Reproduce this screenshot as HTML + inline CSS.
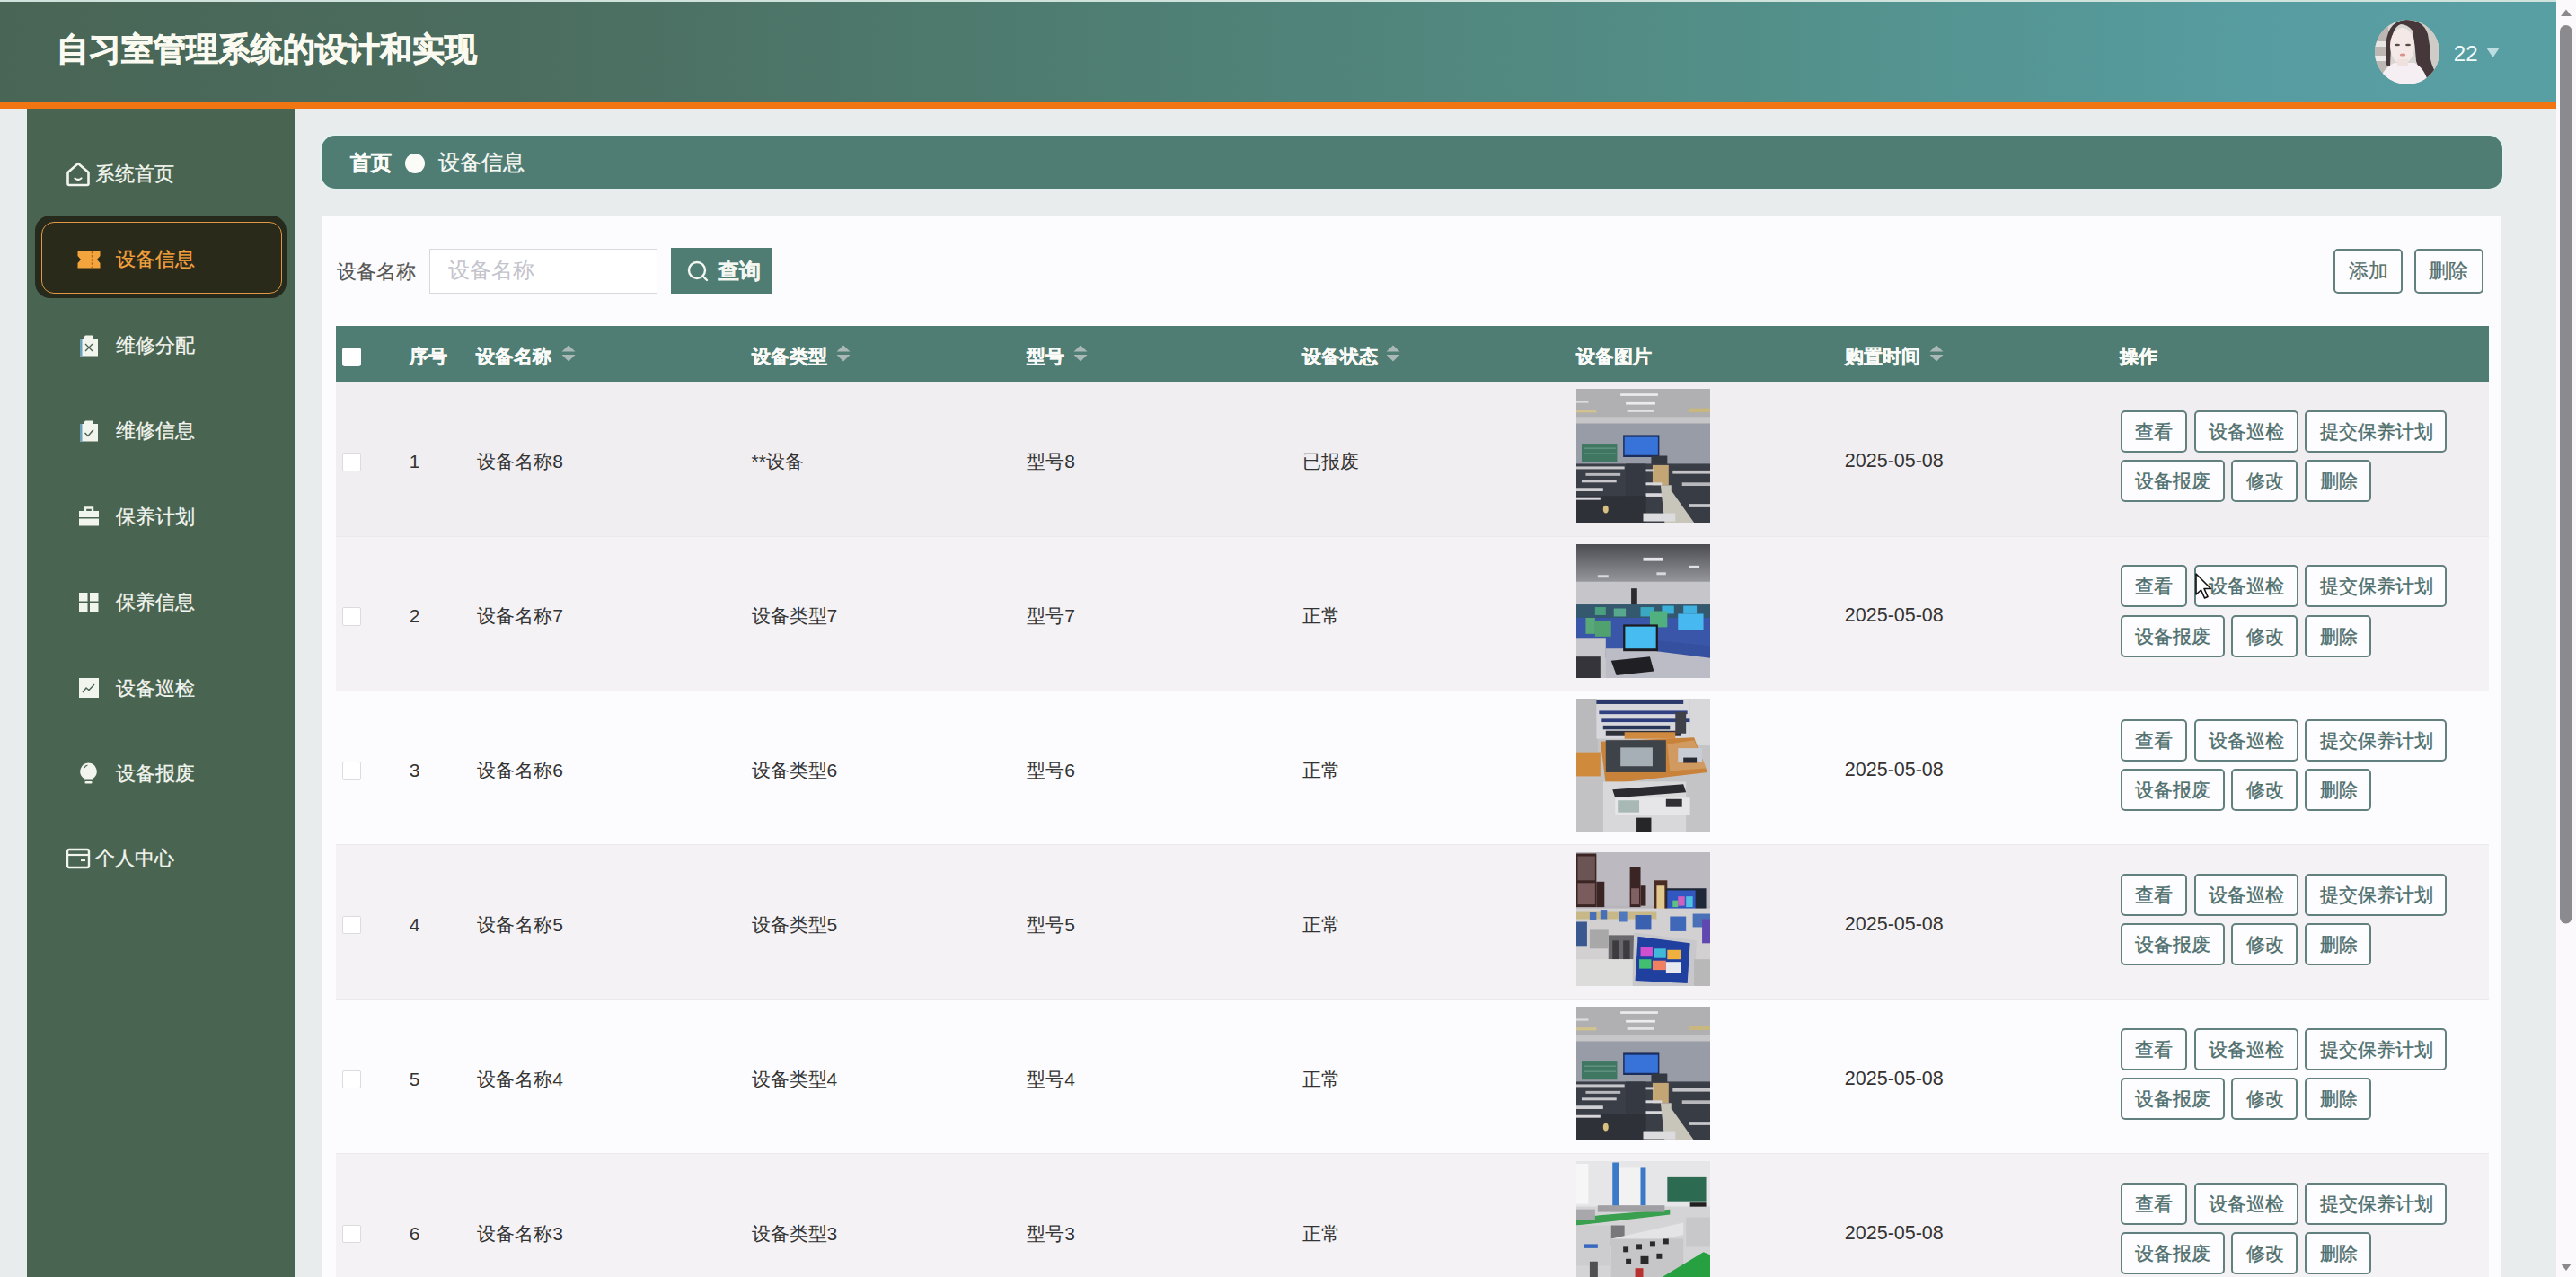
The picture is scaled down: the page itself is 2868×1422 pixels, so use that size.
<!DOCTYPE html>
<html><head><meta charset="utf-8">
<style>
*{box-sizing:border-box;margin:0;padding:0}
html,body{width:2868px;height:1422px;overflow:hidden}
body{position:relative;background:#e8ecec;font-family:"Liberation Sans",sans-serif;color:#333}
.a{position:absolute}
.t{position:absolute;white-space:nowrap}
svg{position:absolute;display:block}
.btn{position:absolute;border:2px solid #62807e;border-radius:5px;background:#fdfcfe}
</style></head><body>
<div class="a" style="left:0px;top:0px;width:2846.0px;height:114.0px;background:linear-gradient(90deg,#496555 0%,#4b6d5f 20%,#4f7f74 45%,#53908a 70%,#579ca0 88%,#589fa4 100%)"></div>
<div class="a" style="left:0px;top:0px;width:2846.0px;height:2.0px;background:#cfe2dc"></div>
<div class="t" style="left:62.6px;top:38.4px;font-size:35.5px;line-height:35.5px;color:#fbfaf0;font-weight:bold;-webkit-text-stroke:0.9px #fbfaf0;">自习室管理系统的设计和实现</div>
<div class="a" style="left:0px;top:114px;width:2846.0px;height:7.0px;background:#f27513"></div>
<svg style="left:2644px;top:22px" width="72" height="72" viewBox="0 0 72 72">
<defs><clipPath id="av"><circle cx="36" cy="36" r="36"/></clipPath></defs>
<g clip-path="url(#av)">
<rect width="72" height="72" fill="#d9d6d3"/>
<rect x="0" y="0" width="15" height="72" fill="#bcb7b2"/>
<rect x="0" y="24" width="14" height="6" fill="#e8e6e4"/>
<rect x="0" y="40" width="14" height="6" fill="#ecebea"/>
<rect x="50" y="0" width="22" height="72" fill="#cfcbc7"/>
<path d="M12 34 Q12 2 34 0 Q54 0 59 16 Q62 30 62 44 Q64 54 70 62 L58 72 Q50 58 46 46 Q45 28 42 12 Q36 5 29 5 Q19 8 18 30 L17 52 L12 50Z" fill="#46383a"/>
<ellipse cx="30.5" cy="29" rx="13.5" ry="20" fill="#f4e9e6"/>
<path d="M4 72 Q8 54 22 48 L44 48 Q56 54 60 72Z" fill="#f5eff3"/>
<rect x="25" y="44" width="12" height="7" fill="#efe1dd"/>
<ellipse cx="25" cy="28" rx="3" ry="1.3" fill="#5a4a44"/><ellipse cx="37" cy="28" rx="3" ry="1.3" fill="#5a4a44"/>
<ellipse cx="31" cy="39" rx="3.2" ry="1.5" fill="#d8948c"/>
</g></svg>
<div class="t" style="left:2731.8px;top:48.4px;font-size:24px;line-height:24px;color:#f4fbfb;">22</div>
<svg style="left:2767px;top:52px" width="17" height="13" viewBox="0 0 17 13"><path d="M1 1 L16 1 L8.5 12Z" fill="#bcdde2"/></svg>
<div class="a" style="left:30px;top:121px;width:298.0px;height:1301.0px;background:#4a6452"></div>
<div class="a" style="left:39px;top:240px;width:280.0px;height:92.0px;background:#252a1c;border-radius:17px"></div>
<div class="a" style="left:45.5px;top:246.5px;width:268.0px;height:80.0px;background:#2a2a1b;border:1.7px solid #e09845;border-radius:14px"></div>
<svg style="left:72.5px;top:179.5px" width="28" height="28" viewBox="0 0 28 28"><path d="M2.5 12 L14 2 L25.5 12 V24.5 Q25.5 26 24 26 H4 Q2.5 26 2.5 24.5Z" fill="none" stroke="#f2f5ee" stroke-width="2.6" stroke-linejoin="round"/><path d="M10.5 18.5 Q14 21.5 17.5 18.5" fill="none" stroke="#f2f5ee" stroke-width="2.2" stroke-linecap="round"/></svg>
<div class="t" style="left:105.5px;top:182.5px;font-size:22px;line-height:22px;color:#f2f5ee;-webkit-text-stroke:0.3px #f2f5ee;">系统首页</div>
<svg style="left:86px;top:279px" width="26" height="20" viewBox="0 0 26 20"><path d="M0.5 0.5 H25.5 V6 L22 10 L25.5 14 V19.5 H0.5 V14 L4 10 L0.5 6Z" fill="#f3a43c"/><path d="M16.5 1 V19" stroke="#b06a20" stroke-width="1.6" stroke-dasharray="2.5 1.6"/></svg>
<div class="t" style="left:129.3px;top:277.7px;font-size:22px;line-height:22px;color:#f3a23e;-webkit-text-stroke:0.3px #f3a23e;">设备信息</div>
<svg style="left:88px;top:373px" width="22" height="24" viewBox="0 0 22 24"><path d="M1 4 H6 V2 Q6 0.5 7.5 0.5 H14.5 Q16 0.5 16 2 V4 H21 V23.5 H1Z" fill="#f2f5ee"/><rect x="1" y="4" width="2.5" height="19.5" fill="#6aa0b8"/><path d="M7 10 L15 18 M15 10 L7 18" stroke="#4a6452" stroke-width="1.4"/></svg>
<div class="t" style="left:129.3px;top:374.0px;font-size:22px;line-height:22px;color:#f2f5ee;-webkit-text-stroke:0.3px #f2f5ee;">维修分配</div>
<svg style="left:88px;top:468px" width="22" height="24" viewBox="0 0 22 24"><path d="M1 4 H6 V2 Q6 0.5 7.5 0.5 H14.5 Q16 0.5 16 2 V4 H21 V23.5 H1Z" fill="#f2f5ee"/><rect x="1" y="4" width="2.5" height="19.5" fill="#6aa0b8"/><path d="M6.5 14 L10 17.5 L16 10.5" fill="none" stroke="#4a6452" stroke-width="1.5"/></svg>
<div class="t" style="left:129.3px;top:468.5px;font-size:22px;line-height:22px;color:#f2f5ee;-webkit-text-stroke:0.3px #f2f5ee;">维修信息</div>
<svg style="left:88px;top:564px" width="22" height="22" viewBox="0 0 22 22"><path d="M7 5 V1.5 H15 V5" fill="none" stroke="#f2f5ee" stroke-width="2.4"/><rect x="0" y="5" width="22" height="7" fill="#f2f5ee"/><rect x="0" y="13.5" width="22" height="8" fill="#f2f5ee"/></svg>
<div class="t" style="left:129.3px;top:564.5px;font-size:22px;line-height:22px;color:#f2f5ee;-webkit-text-stroke:0.3px #f2f5ee;">保养计划</div>
<svg style="left:88px;top:660px" width="22" height="22" viewBox="0 0 22 22"><rect x="0" y="0" width="9.5" height="9.5" fill="#f2f5ee"/><rect x="12" y="0" width="9.5" height="9.5" fill="#f2f5ee"/><rect x="0" y="12" width="9.5" height="9.5" fill="#f2f5ee"/><rect x="12" y="12" width="9.5" height="9.5" fill="#f2f5ee"/></svg>
<div class="t" style="left:129.3px;top:660.0px;font-size:22px;line-height:22px;color:#f2f5ee;-webkit-text-stroke:0.3px #f2f5ee;">保养信息</div>
<svg style="left:88px;top:755px" width="22" height="22" viewBox="0 0 22 22"><rect x="0" y="0" width="22" height="22" fill="#f2f5ee"/><path d="M4 16 L8 11 L11 13.5 L17 7" fill="none" stroke="#4a6452" stroke-width="1.4"/></svg>
<div class="t" style="left:129.3px;top:755.5px;font-size:22px;line-height:22px;color:#f2f5ee;-webkit-text-stroke:0.3px #f2f5ee;">设备巡检</div>
<svg style="left:88px;top:849px" width="21" height="25" viewBox="0 0 21 25"><path d="M10.5 0.5 A9.5 9.5 0 0 1 16 17.5 L15 19.5 H6 L5 17.5 A9.5 9.5 0 0 1 10.5 0.5Z" fill="#f2f5ee"/><rect x="6.5" y="21" width="8" height="2.4" rx="1" fill="#f2f5ee"/><path d="M6 6 Q7 3.5 9.5 3" stroke="#4a6452" stroke-width="1.2" fill="none"/></svg>
<div class="t" style="left:129.3px;top:850.5px;font-size:22px;line-height:22px;color:#f2f5ee;-webkit-text-stroke:0.3px #f2f5ee;">设备报废</div>
<svg style="left:73px;top:944px" width="28" height="24" viewBox="0 0 28 24"><rect x="2" y="2" width="24" height="20" rx="2" fill="none" stroke="#f2f5ee" stroke-width="2.4"/><path d="M2 8 H26" stroke="#f2f5ee" stroke-width="2.2"/><path d="M17 14 H22" stroke="#f2f5ee" stroke-width="2.2"/></svg>
<div class="t" style="left:105.5px;top:945.0px;font-size:22px;line-height:22px;color:#f2f5ee;-webkit-text-stroke:0.3px #f2f5ee;">个人中心</div>
<div class="a" style="left:358px;top:151px;width:2428.0px;height:59.0px;background:#4f7d73;border-radius:15px;box-shadow:0 0 0 1.5px #e4f3f0"></div>
<div class="t" style="left:389.8px;top:170.3px;font-size:23px;line-height:23px;color:#fbfcf8;font-weight:bold;-webkit-text-stroke:0.5px #fbfcf8;">首页</div>
<div class="a" style="left:450.5px;top:170.7px;width:22.6px;height:22.6px;border-radius:50%;background:#fbfcf8"></div>
<div class="t" style="left:487.8px;top:170.3px;font-size:23.5px;line-height:23.5px;color:#f6f8f4;-webkit-text-stroke:0.3px #f6f8f4;">设备信息</div>
<div class="a" style="left:358px;top:240px;width:2426.0px;height:1182.0px;background:#fcfbfd"></div>
<div class="t" style="left:374.8px;top:291.9px;font-size:22px;line-height:22px;color:#555;-webkit-text-stroke:0.2px #555;">设备名称</div>
<div class="a" style="left:478px;top:277px;width:253.5px;height:49.6px;background:#fff;border:1.5px solid #d9d9dd"></div>
<div class="t" style="left:498.8px;top:289.6px;font-size:23.5px;line-height:23.5px;color:#c3c3cb;">设备名称</div>
<div class="a" style="left:747px;top:276.4px;width:113.0px;height:50.2px;background:#4f7d73"></div>
<svg style="left:764px;top:289px" width="26" height="26" viewBox="0 0 26 26"><circle cx="12" cy="12" r="9" fill="none" stroke="#f4f6f2" stroke-width="2.4"/><path d="M18.5 18.5 L23 23" stroke="#f4f6f2" stroke-width="2.4" stroke-linecap="round"/></svg>
<div class="t" style="left:798.5px;top:290.3px;font-size:24px;line-height:24px;color:#f4f6f2;font-weight:bold;-webkit-text-stroke:0.4px #f4f6f2;">查询</div>
<div class="btn" style="left:2598px;top:276.7px;width:77px;height:50px"></div>
<div class="t" style="left:2614.8px;top:290.8px;font-size:22px;line-height:22px;color:#55706d;-webkit-text-stroke:0.3px #55706d;">添加</div>
<div class="btn" style="left:2687.6px;top:276.7px;width:77px;height:50px"></div>
<div class="t" style="left:2703.8px;top:290.8px;font-size:22px;line-height:22px;color:#55706d;-webkit-text-stroke:0.3px #55706d;">删除</div>
<div class="a" style="left:373.5px;top:363px;width:2397.0px;height:62.0px;background:#4f7d73"></div>
<div class="a" style="left:381px;top:387px;width:21.0px;height:20.5px;background:#fff;border-radius:3px"></div>
<div class="t" style="left:455.8px;top:385.9px;font-size:21px;line-height:21px;color:#fafbf8;font-weight:bold;-webkit-text-stroke:0.4px #fafbf8;">序号</div>
<div class="t" style="left:530.3px;top:385.9px;font-size:21px;line-height:21px;color:#fafbf8;font-weight:bold;-webkit-text-stroke:0.4px #fafbf8;">设备名称</div>
<svg style="left:624.5px;top:383.5px" width="16" height="19" viewBox="0 0 16 19"><path d="M8 0.5 L15.5 7.5 H0.5Z" fill="#aab9b6"/><path d="M8 18.5 L15.5 11 H0.5Z" fill="#aab9b6"/></svg>
<div class="t" style="left:836.5px;top:385.9px;font-size:21px;line-height:21px;color:#fafbf8;font-weight:bold;-webkit-text-stroke:0.4px #fafbf8;">设备类型</div>
<svg style="left:931px;top:383.5px" width="16" height="19" viewBox="0 0 16 19"><path d="M8 0.5 L15.5 7.5 H0.5Z" fill="#aab9b6"/><path d="M8 18.5 L15.5 11 H0.5Z" fill="#aab9b6"/></svg>
<div class="t" style="left:1143.3px;top:385.9px;font-size:21px;line-height:21px;color:#fafbf8;font-weight:bold;-webkit-text-stroke:0.4px #fafbf8;">型号</div>
<svg style="left:1195px;top:383.5px" width="16" height="19" viewBox="0 0 16 19"><path d="M8 0.5 L15.5 7.5 H0.5Z" fill="#aab9b6"/><path d="M8 18.5 L15.5 11 H0.5Z" fill="#aab9b6"/></svg>
<div class="t" style="left:1449.8px;top:385.9px;font-size:21px;line-height:21px;color:#fafbf8;font-weight:bold;-webkit-text-stroke:0.4px #fafbf8;">设备状态</div>
<svg style="left:1542.5px;top:383.5px" width="16" height="19" viewBox="0 0 16 19"><path d="M8 0.5 L15.5 7.5 H0.5Z" fill="#aab9b6"/><path d="M8 18.5 L15.5 11 H0.5Z" fill="#aab9b6"/></svg>
<div class="t" style="left:1755.2px;top:385.9px;font-size:21px;line-height:21px;color:#fafbf8;font-weight:bold;-webkit-text-stroke:0.4px #fafbf8;">设备图片</div>
<div class="t" style="left:2053.8px;top:385.9px;font-size:21px;line-height:21px;color:#fafbf8;font-weight:bold;-webkit-text-stroke:0.4px #fafbf8;">购置时间</div>
<svg style="left:2148.4px;top:383.5px" width="16" height="19" viewBox="0 0 16 19"><path d="M8 0.5 L15.5 7.5 H0.5Z" fill="#aab9b6"/><path d="M8 18.5 L15.5 11 H0.5Z" fill="#aab9b6"/></svg>
<div class="t" style="left:2359.8px;top:385.9px;font-size:21px;line-height:21px;color:#fafbf8;font-weight:bold;-webkit-text-stroke:0.4px #fafbf8;">操作</div>
<div class="a" style="left:373.5px;top:425px;width:2397.0px;height:173.0px;background:#f0eef1;border-bottom:1.5px solid #ebe9ec"></div>
<div class="a" style="left:381px;top:504.0px;width:20.6px;height:20.5px;background:#fff;border:1px solid #dcdcdf;border-radius:2px"></div>
<div class="t" style="left:455.8px;top:503.0px;font-size:21px;line-height:21px;color:#333;">1</div>
<div class="t" style="left:531.2px;top:503.0px;font-size:21px;line-height:21px;color:#333;">设备名称8</div>
<div class="t" style="left:836.5px;top:503.0px;font-size:21px;line-height:21px;color:#333;">**设备</div>
<div class="t" style="left:1143.3px;top:503.0px;font-size:21px;line-height:21px;color:#333;">型号8</div>
<div class="t" style="left:1449.8px;top:503.0px;font-size:21px;line-height:21px;color:#333;">已报废</div>
<svg style="left:1755px;top:433.0px" width="149" height="149" viewBox="0 0 100 100" preserveAspectRatio="none"><rect width="100" height="100" fill="#8e929c"/>
<rect width="100" height="22" fill="#b0b0b2"/>
<rect x="33" y="3.5" width="28" height="1.8" fill="#ececec"/>
<rect x="37" y="10" width="22" height="1.8" fill="#ececec"/>
<rect x="38" y="15.5" width="20" height="1.8" fill="#e4e4e4"/>
<rect x="0" y="15.5" width="15" height="2.2" fill="#d2c28e"/>
<rect x="84" y="14.5" width="16" height="3" fill="#c8b880"/>
<rect x="0" y="9" width="9" height="1.5" fill="#dcdcdc"/>
<rect x="0" y="21" width="100" height="5" fill="#c6c6c8"/>
<rect x="0" y="26" width="100" height="31" fill="#989ca6"/>
<rect x="4" y="41" width="26.5" height="13.5" fill="#3f7763"/>
<rect x="5.5" y="44" width="24" height="0.8" fill="#6a9a86"/><rect x="5.5" y="48" width="24" height="0.8" fill="#6a9a86"/>
<rect x="35" y="34.5" width="27" height="16.5" fill="#1c2c5c"/>
<rect x="36" y="36" width="25" height="13.5" fill="#3773d8"/>
<rect x="56" y="50" width="12" height="7" fill="#33373f"/>
<rect x="0" y="56" width="100" height="44" fill="#3a3e47"/>
<rect x="0" y="58" width="36" height="2" fill="#c8c8cc"/>
<rect x="7" y="63" width="26" height="2" fill="#b8b8bc"/>
<rect x="4" y="68" width="26" height="2" fill="#c8c8cc"/>
<rect x="0" y="74" width="20" height="2.5" fill="#d0d0d4"/>
<rect x="37" y="56" width="15" height="44" fill="#353942"/>
<rect x="57" y="57" width="12" height="15" fill="#c4a674"/>
<rect x="52" y="60" width="6" height="2" fill="#c8c8cc"/>
<rect x="52" y="70" width="12" height="2" fill="#d8d8dc"/>
<rect x="52" y="78" width="14" height="2.5" fill="#d8d8dc"/>
<path d="M63 72 L71 72 L90 100 L66 100Z" fill="#c8c5bb"/>
<path d="M71 58 L100 58 L100 100 L88 100 L71 76Z" fill="#383c44"/>
<rect x="72" y="61" width="28" height="2.5" fill="#c4c4c8"/>
<rect x="79" y="70" width="21" height="2.5" fill="#b8b8bc"/>
<rect x="84" y="86" width="16" height="2.5" fill="#c8c8cc"/>
<rect x="0" y="80" width="52" height="20" fill="#2e3138"/>
<rect x="0" y="81" width="18" height="2" fill="#d8d8dc"/>
<rect x="50" y="93" width="24" height="6" fill="#dcdcde"/>
<ellipse cx="22" cy="90" rx="2" ry="3" fill="#d8c080"/></svg>
<div class="t" style="left:2053.8px;top:503.0px;font-size:21.5px;line-height:21.5px;color:#333;">2025-05-08</div>
<div class="btn" style="left:2360.7px;top:457.0px;width:74px;height:47px"></div>
<div class="t" style="left:2377.1px;top:470.0px;font-size:21px;line-height:21px;color:#4f6f6d;-webkit-text-stroke:0.35px #4f6f6d;">查看</div>
<div class="btn" style="left:2442.5px;top:457.0px;width:116px;height:47px"></div>
<div class="t" style="left:2458.9px;top:470.0px;font-size:21px;line-height:21px;color:#4f6f6d;-webkit-text-stroke:0.35px #4f6f6d;">设备巡检</div>
<div class="btn" style="left:2566.4px;top:457.0px;width:158px;height:47px"></div>
<div class="t" style="left:2582.8px;top:470.0px;font-size:21px;line-height:21px;color:#4f6f6d;-webkit-text-stroke:0.35px #4f6f6d;">提交保养计划</div>
<div class="btn" style="left:2360.7px;top:512.3px;width:116px;height:47px"></div>
<div class="t" style="left:2377.1px;top:525.3px;font-size:21px;line-height:21px;color:#4f6f6d;-webkit-text-stroke:0.35px #4f6f6d;">设备报废</div>
<div class="btn" style="left:2484.4px;top:512.3px;width:74px;height:47px"></div>
<div class="t" style="left:2500.8px;top:525.3px;font-size:21px;line-height:21px;color:#4f6f6d;-webkit-text-stroke:0.35px #4f6f6d;">修改</div>
<div class="btn" style="left:2566.4px;top:512.3px;width:74px;height:47px"></div>
<div class="t" style="left:2582.8px;top:525.3px;font-size:21px;line-height:21px;color:#4f6f6d;-webkit-text-stroke:0.35px #4f6f6d;">删除</div>
<div class="a" style="left:373.5px;top:598px;width:2397.0px;height:171.7px;background:#f4f2f5;border-bottom:1.5px solid #ebe9ec"></div>
<div class="a" style="left:381px;top:676.35px;width:20.6px;height:20.5px;background:#fff;border:1px solid #dcdcdf;border-radius:2px"></div>
<div class="t" style="left:455.8px;top:675.4px;font-size:21px;line-height:21px;color:#333;">2</div>
<div class="t" style="left:531.2px;top:675.4px;font-size:21px;line-height:21px;color:#333;">设备名称7</div>
<div class="t" style="left:836.5px;top:675.4px;font-size:21px;line-height:21px;color:#333;">设备类型7</div>
<div class="t" style="left:1143.3px;top:675.4px;font-size:21px;line-height:21px;color:#333;">型号7</div>
<div class="t" style="left:1449.8px;top:675.4px;font-size:21px;line-height:21px;color:#333;">正常</div>
<svg style="left:1755px;top:606.0px" width="149" height="149" viewBox="0 0 100 100" preserveAspectRatio="none"><defs><linearGradient id="gb" x1="0" y1="0" x2="0" y2="1"><stop offset="0" stop-color="#4a4c52"/><stop offset="1" stop-color="#9a9ca2"/></linearGradient></defs>
<rect width="100" height="100" fill="#c4c4c8"/>
<rect width="100" height="30" fill="url(#gb)"/>
<rect x="50" y="10" width="15" height="2.5" fill="#e6e6ea"/>
<rect x="84" y="16" width="8" height="2" fill="#e0e0e4"/>
<rect x="16" y="23" width="8" height="2" fill="#d8d8dc"/>
<rect x="60" y="21" width="7" height="2" fill="#d8d8dc"/>
<rect x="0" y="28" width="100" height="20" fill="#c6c6ca"/>
<rect x="41" y="33" width="4.5" height="14" fill="#2c2c30"/>
<rect x="0" y="45" width="100" height="12" fill="#34586e"/>
<rect x="14" y="47" width="8" height="6" fill="#4aa07e"/>
<rect x="28" y="48" width="9" height="6" fill="#58a890"/>
<rect x="48" y="47" width="10" height="7" fill="#3aa8c0"/>
<rect x="64" y="46" width="9" height="6" fill="#3ab0d8"/>
<rect x="80" y="46" width="10" height="6" fill="#40b0e0"/>
<rect x="0" y="55" width="100" height="30" fill="#3a56a8"/>
<rect x="55" y="50" width="13" height="12" fill="#50b080"/>
<rect x="76" y="52" width="19" height="12" fill="#48b8f0"/>
<rect x="7" y="55" width="7" height="12" fill="#58a878"/>
<rect x="14" y="57" width="12" height="12" fill="#50a070"/>
<rect x="0" y="70" width="22" height="30" fill="#c8c8cc"/>
<rect x="22" y="78" width="78" height="22" fill="#bcbcc6"/>
<path d="M60 72 L100 76 L100 85 L60 80Z" fill="#3650a0"/>
<rect x="35" y="60" width="26" height="20" fill="#1c1c20"/>
<rect x="36.5" y="61.5" width="23" height="16.5" fill="#46bcf0"/>
<path d="M26 87 L55 84 L58 95 L30 98Z" fill="#202024"/>
<rect x="0" y="84" width="18" height="16" fill="#34343a"/>
<rect x="0" y="0" width="100" height="100" fill="none"/></svg>
<div class="t" style="left:2053.8px;top:675.3px;font-size:21.5px;line-height:21.5px;color:#333;">2025-05-08</div>
<div class="btn" style="left:2360.7px;top:629.4px;width:74px;height:47px"></div>
<div class="t" style="left:2377.1px;top:642.4px;font-size:21px;line-height:21px;color:#4f6f6d;-webkit-text-stroke:0.35px #4f6f6d;">查看</div>
<div class="btn" style="left:2442.5px;top:629.4px;width:116px;height:47px"></div>
<div class="t" style="left:2458.9px;top:642.4px;font-size:21px;line-height:21px;color:#4f6f6d;-webkit-text-stroke:0.35px #4f6f6d;">设备巡检</div>
<div class="btn" style="left:2566.4px;top:629.4px;width:158px;height:47px"></div>
<div class="t" style="left:2582.8px;top:642.4px;font-size:21px;line-height:21px;color:#4f6f6d;-webkit-text-stroke:0.35px #4f6f6d;">提交保养计划</div>
<div class="btn" style="left:2360.7px;top:684.6px;width:116px;height:47px"></div>
<div class="t" style="left:2377.1px;top:697.6px;font-size:21px;line-height:21px;color:#4f6f6d;-webkit-text-stroke:0.35px #4f6f6d;">设备报废</div>
<div class="btn" style="left:2484.4px;top:684.6px;width:74px;height:47px"></div>
<div class="t" style="left:2500.8px;top:697.6px;font-size:21px;line-height:21px;color:#4f6f6d;-webkit-text-stroke:0.35px #4f6f6d;">修改</div>
<div class="btn" style="left:2566.4px;top:684.6px;width:74px;height:47px"></div>
<div class="t" style="left:2582.8px;top:697.6px;font-size:21px;line-height:21px;color:#4f6f6d;-webkit-text-stroke:0.35px #4f6f6d;">删除</div>
<div class="a" style="left:373.5px;top:769.7px;width:2397.0px;height:171.7px;background:#fcfbfd;border-bottom:1.5px solid #ebe9ec"></div>
<div class="a" style="left:381px;top:848.0500000000001px;width:20.6px;height:20.5px;background:#fff;border:1px solid #dcdcdf;border-radius:2px"></div>
<div class="t" style="left:455.8px;top:847.1px;font-size:21px;line-height:21px;color:#333;">3</div>
<div class="t" style="left:531.2px;top:847.1px;font-size:21px;line-height:21px;color:#333;">设备名称6</div>
<div class="t" style="left:836.5px;top:847.1px;font-size:21px;line-height:21px;color:#333;">设备类型6</div>
<div class="t" style="left:1143.3px;top:847.1px;font-size:21px;line-height:21px;color:#333;">型号6</div>
<div class="t" style="left:1449.8px;top:847.1px;font-size:21px;line-height:21px;color:#333;">正常</div>
<svg style="left:1755px;top:777.7px" width="149" height="149" viewBox="0 0 100 100" preserveAspectRatio="none"><rect width="100" height="100" fill="#c4c4c6"/>
<rect x="0" y="0" width="16" height="40" fill="#bababc"/>
<rect x="15" y="0" width="70" height="30" fill="#d8d8dc"/>
<rect x="15" y="1" width="65" height="3" fill="#2a3a6a"/>
<rect x="17" y="9" width="66" height="2.5" fill="#304080"/>
<rect x="19" y="15" width="66" height="2.5" fill="#2c3c7c"/>
<rect x="20" y="20" width="50" height="3" fill="#283458"/>
<rect x="22" y="24" width="56" height="4" fill="#30303a"/>
<rect x="85" y="0" width="15" height="35" fill="#d8d8da"/>
<rect x="74" y="10" width="8" height="16" fill="#404048"/>
<rect x="0" y="40" width="18" height="18" fill="#d08a3c"/>
<rect x="36" y="25" width="38" height="5" fill="#d08a40"/>
<path d="M18 32 L88 29 L98 55 L22 64Z" fill="#c8823a"/>
<rect x="22" y="31" width="45" height="24" fill="#3e4249"/>
<rect x="33" y="36.5" width="24" height="14" fill="#a6aeb6"/>
<path d="M68 34 L88 31 L97 52 L70 54Z" fill="#d09a60"/>
<rect x="76" y="37" width="18" height="10" fill="#c8ccd4"/>
<rect x="80" y="44" width="10" height="4" fill="#2a2a34"/>
<rect x="20" y="62" width="62" height="38" fill="#d8d8da"/>
<path d="M27 68 L80 64 L82 70 L29 74Z" fill="#2a2a30"/>
<rect x="29" y="74" width="56" height="13" fill="#e6e6e8"/>
<rect x="31" y="76" width="16" height="9" fill="#a8b8b4"/>
<rect x="67" y="75" width="12" height="6" fill="#303034"/>
<rect x="45" y="89" width="11" height="11" fill="#262628"/>
<rect x="0" y="60" width="20" height="40" fill="#c2c2c4"/></svg>
<div class="t" style="left:2053.8px;top:847.0px;font-size:21.5px;line-height:21.5px;color:#333;">2025-05-08</div>
<div class="btn" style="left:2360.7px;top:801.1px;width:74px;height:47px"></div>
<div class="t" style="left:2377.1px;top:814.1px;font-size:21px;line-height:21px;color:#4f6f6d;-webkit-text-stroke:0.35px #4f6f6d;">查看</div>
<div class="btn" style="left:2442.5px;top:801.1px;width:116px;height:47px"></div>
<div class="t" style="left:2458.9px;top:814.1px;font-size:21px;line-height:21px;color:#4f6f6d;-webkit-text-stroke:0.35px #4f6f6d;">设备巡检</div>
<div class="btn" style="left:2566.4px;top:801.1px;width:158px;height:47px"></div>
<div class="t" style="left:2582.8px;top:814.1px;font-size:21px;line-height:21px;color:#4f6f6d;-webkit-text-stroke:0.35px #4f6f6d;">提交保养计划</div>
<div class="btn" style="left:2360.7px;top:856.4px;width:116px;height:47px"></div>
<div class="t" style="left:2377.1px;top:869.4px;font-size:21px;line-height:21px;color:#4f6f6d;-webkit-text-stroke:0.35px #4f6f6d;">设备报废</div>
<div class="btn" style="left:2484.4px;top:856.4px;width:74px;height:47px"></div>
<div class="t" style="left:2500.8px;top:869.4px;font-size:21px;line-height:21px;color:#4f6f6d;-webkit-text-stroke:0.35px #4f6f6d;">修改</div>
<div class="btn" style="left:2566.4px;top:856.4px;width:74px;height:47px"></div>
<div class="t" style="left:2582.8px;top:869.4px;font-size:21px;line-height:21px;color:#4f6f6d;-webkit-text-stroke:0.35px #4f6f6d;">删除</div>
<div class="a" style="left:373.5px;top:941.4px;width:2397.0px;height:171.9px;background:#f4f2f5;border-bottom:1.5px solid #ebe9ec"></div>
<div class="a" style="left:381px;top:1019.8499999999999px;width:20.6px;height:20.5px;background:#fff;border:1px solid #dcdcdf;border-radius:2px"></div>
<div class="t" style="left:455.8px;top:1018.8px;font-size:21px;line-height:21px;color:#333;">4</div>
<div class="t" style="left:531.2px;top:1018.8px;font-size:21px;line-height:21px;color:#333;">设备名称5</div>
<div class="t" style="left:836.5px;top:1018.8px;font-size:21px;line-height:21px;color:#333;">设备类型5</div>
<div class="t" style="left:1143.3px;top:1018.8px;font-size:21px;line-height:21px;color:#333;">型号5</div>
<div class="t" style="left:1449.8px;top:1018.8px;font-size:21px;line-height:21px;color:#333;">正常</div>
<svg style="left:1755px;top:949.4px" width="149" height="149" viewBox="0 0 100 100" preserveAspectRatio="none"><rect width="100" height="100" fill="#b7b5bb"/>
<rect x="0" y="0" width="100" height="40" fill="#bcbac0"/>
<rect x="0" y="1" width="15" height="40" fill="#3a2424"/>
<rect x="1" y="3" width="13" height="18" fill="#6a5454"/>
<rect x="1" y="23" width="13" height="16" fill="#7a5c5c"/>
<rect x="15" y="22" width="6" height="19" fill="#3a2424"/>
<rect x="40" y="11" width="8" height="30" fill="#3a2424"/>
<rect x="41" y="27" width="6" height="12" fill="#806060"/>
<rect x="48" y="25" width="4" height="15" fill="#3a2424"/>
<rect x="58" y="21" width="10" height="26" fill="#4a2c20"/>
<rect x="60" y="25" width="6" height="20" fill="#e0c88e"/>
<rect x="67" y="27" width="30" height="19" fill="#202838"/>
<rect x="68" y="28.5" width="21" height="15" fill="#3058c0"/>
<rect x="72" y="36" width="4" height="5" fill="#60c080"/><rect x="76" y="33" width="5" height="7" fill="#d060c0"/><rect x="82" y="33" width="5" height="8" fill="#50c0e0"/>
<rect x="0" y="42" width="100" height="58" fill="#d2d0d0"/>
<rect x="0" y="44" width="60" height="6" fill="#c8b888"/>
<rect x="10" y="45" width="5" height="6" fill="#4870b8"/>
<rect x="18" y="43" width="5" height="7" fill="#4870b8"/>
<rect x="32" y="44" width="6" height="8" fill="#5078c0"/>
<rect x="44" y="47" width="12" height="11" fill="#3a60b0"/>
<rect x="70" y="48" width="12" height="11" fill="#4068b8"/>
<rect x="87" y="46" width="13" height="10" fill="#4a70b8"/>
<rect x="0" y="52" width="8" height="18" fill="#3a5890"/>
<rect x="94" y="50" width="6" height="18" fill="#6048b0"/>
<rect x="24" y="62" width="20" height="18" fill="#6a686c"/><rect x="27" y="66" width="5" height="14" fill="#3c3c40"/><rect x="35" y="66" width="5" height="14" fill="#3c3c40"/>
<rect x="10" y="58" width="14" height="14" fill="#a8a8a8"/>
<path d="M43 60 L90 66 L88 100 L42 100Z" fill="#c8c8cc"/>
<path d="M46 63 L85 68 L83 98 L44 96Z" fill="#2040a0"/>
<rect x="48" y="71" width="9" height="7" fill="#d050d0"/><rect x="58" y="72" width="9" height="7" fill="#40b8d8"/><rect x="68" y="73" width="10" height="7" fill="#f0b040"/>
<rect x="47" y="80" width="9" height="7" fill="#40c070"/><rect x="57" y="81" width="10" height="7" fill="#f08060"/><rect x="67" y="82" width="11" height="8" fill="#e8e8f0"/>
<rect x="0" y="80" width="42" height="20" fill="#dcdcda"/>
<rect x="88" y="80" width="12" height="20" fill="#b8b8b8"/></svg>
<div class="t" style="left:2053.8px;top:1018.8px;font-size:21.5px;line-height:21.5px;color:#333;">2025-05-08</div>
<div class="btn" style="left:2360.7px;top:972.8px;width:74px;height:47px"></div>
<div class="t" style="left:2377.1px;top:985.8px;font-size:21px;line-height:21px;color:#4f6f6d;-webkit-text-stroke:0.35px #4f6f6d;">查看</div>
<div class="btn" style="left:2442.5px;top:972.8px;width:116px;height:47px"></div>
<div class="t" style="left:2458.9px;top:985.8px;font-size:21px;line-height:21px;color:#4f6f6d;-webkit-text-stroke:0.35px #4f6f6d;">设备巡检</div>
<div class="btn" style="left:2566.4px;top:972.8px;width:158px;height:47px"></div>
<div class="t" style="left:2582.8px;top:985.8px;font-size:21px;line-height:21px;color:#4f6f6d;-webkit-text-stroke:0.35px #4f6f6d;">提交保养计划</div>
<div class="btn" style="left:2360.7px;top:1028.1px;width:116px;height:47px"></div>
<div class="t" style="left:2377.1px;top:1041.1px;font-size:21px;line-height:21px;color:#4f6f6d;-webkit-text-stroke:0.35px #4f6f6d;">设备报废</div>
<div class="btn" style="left:2484.4px;top:1028.1px;width:74px;height:47px"></div>
<div class="t" style="left:2500.8px;top:1041.1px;font-size:21px;line-height:21px;color:#4f6f6d;-webkit-text-stroke:0.35px #4f6f6d;">修改</div>
<div class="btn" style="left:2566.4px;top:1028.1px;width:74px;height:47px"></div>
<div class="t" style="left:2582.8px;top:1041.1px;font-size:21px;line-height:21px;color:#4f6f6d;-webkit-text-stroke:0.35px #4f6f6d;">删除</div>
<div class="a" style="left:373.5px;top:1113.3px;width:2397.0px;height:171.7px;background:#fcfbfd;border-bottom:1.5px solid #ebe9ec"></div>
<div class="a" style="left:381px;top:1191.6499999999999px;width:20.6px;height:20.5px;background:#fff;border:1px solid #dcdcdf;border-radius:2px"></div>
<div class="t" style="left:455.8px;top:1190.6px;font-size:21px;line-height:21px;color:#333;">5</div>
<div class="t" style="left:531.2px;top:1190.6px;font-size:21px;line-height:21px;color:#333;">设备名称4</div>
<div class="t" style="left:836.5px;top:1190.6px;font-size:21px;line-height:21px;color:#333;">设备类型4</div>
<div class="t" style="left:1143.3px;top:1190.6px;font-size:21px;line-height:21px;color:#333;">型号4</div>
<div class="t" style="left:1449.8px;top:1190.6px;font-size:21px;line-height:21px;color:#333;">正常</div>
<svg style="left:1755px;top:1121.3px" width="149" height="149" viewBox="0 0 100 100" preserveAspectRatio="none"><rect width="100" height="100" fill="#8e929c"/>
<rect width="100" height="22" fill="#b0b0b2"/>
<rect x="33" y="3.5" width="28" height="1.8" fill="#ececec"/>
<rect x="37" y="10" width="22" height="1.8" fill="#ececec"/>
<rect x="38" y="15.5" width="20" height="1.8" fill="#e4e4e4"/>
<rect x="0" y="15.5" width="15" height="2.2" fill="#d2c28e"/>
<rect x="84" y="14.5" width="16" height="3" fill="#c8b880"/>
<rect x="0" y="9" width="9" height="1.5" fill="#dcdcdc"/>
<rect x="0" y="21" width="100" height="5" fill="#c6c6c8"/>
<rect x="0" y="26" width="100" height="31" fill="#989ca6"/>
<rect x="4" y="41" width="26.5" height="13.5" fill="#3f7763"/>
<rect x="5.5" y="44" width="24" height="0.8" fill="#6a9a86"/><rect x="5.5" y="48" width="24" height="0.8" fill="#6a9a86"/>
<rect x="35" y="34.5" width="27" height="16.5" fill="#1c2c5c"/>
<rect x="36" y="36" width="25" height="13.5" fill="#3773d8"/>
<rect x="56" y="50" width="12" height="7" fill="#33373f"/>
<rect x="0" y="56" width="100" height="44" fill="#3a3e47"/>
<rect x="0" y="58" width="36" height="2" fill="#c8c8cc"/>
<rect x="7" y="63" width="26" height="2" fill="#b8b8bc"/>
<rect x="4" y="68" width="26" height="2" fill="#c8c8cc"/>
<rect x="0" y="74" width="20" height="2.5" fill="#d0d0d4"/>
<rect x="37" y="56" width="15" height="44" fill="#353942"/>
<rect x="57" y="57" width="12" height="15" fill="#c4a674"/>
<rect x="52" y="60" width="6" height="2" fill="#c8c8cc"/>
<rect x="52" y="70" width="12" height="2" fill="#d8d8dc"/>
<rect x="52" y="78" width="14" height="2.5" fill="#d8d8dc"/>
<path d="M63 72 L71 72 L90 100 L66 100Z" fill="#c8c5bb"/>
<path d="M71 58 L100 58 L100 100 L88 100 L71 76Z" fill="#383c44"/>
<rect x="72" y="61" width="28" height="2.5" fill="#c4c4c8"/>
<rect x="79" y="70" width="21" height="2.5" fill="#b8b8bc"/>
<rect x="84" y="86" width="16" height="2.5" fill="#c8c8cc"/>
<rect x="0" y="80" width="52" height="20" fill="#2e3138"/>
<rect x="0" y="81" width="18" height="2" fill="#d8d8dc"/>
<rect x="50" y="93" width="24" height="6" fill="#dcdcde"/>
<ellipse cx="22" cy="90" rx="2" ry="3" fill="#d8c080"/></svg>
<div class="t" style="left:2053.8px;top:1190.6px;font-size:21.5px;line-height:21.5px;color:#333;">2025-05-08</div>
<div class="btn" style="left:2360.7px;top:1144.6px;width:74px;height:47px"></div>
<div class="t" style="left:2377.1px;top:1157.6px;font-size:21px;line-height:21px;color:#4f6f6d;-webkit-text-stroke:0.35px #4f6f6d;">查看</div>
<div class="btn" style="left:2442.5px;top:1144.6px;width:116px;height:47px"></div>
<div class="t" style="left:2458.9px;top:1157.6px;font-size:21px;line-height:21px;color:#4f6f6d;-webkit-text-stroke:0.35px #4f6f6d;">设备巡检</div>
<div class="btn" style="left:2566.4px;top:1144.6px;width:158px;height:47px"></div>
<div class="t" style="left:2582.8px;top:1157.6px;font-size:21px;line-height:21px;color:#4f6f6d;-webkit-text-stroke:0.35px #4f6f6d;">提交保养计划</div>
<div class="btn" style="left:2360.7px;top:1199.9px;width:116px;height:47px"></div>
<div class="t" style="left:2377.1px;top:1212.9px;font-size:21px;line-height:21px;color:#4f6f6d;-webkit-text-stroke:0.35px #4f6f6d;">设备报废</div>
<div class="btn" style="left:2484.4px;top:1199.9px;width:74px;height:47px"></div>
<div class="t" style="left:2500.8px;top:1212.9px;font-size:21px;line-height:21px;color:#4f6f6d;-webkit-text-stroke:0.35px #4f6f6d;">修改</div>
<div class="btn" style="left:2566.4px;top:1199.9px;width:74px;height:47px"></div>
<div class="t" style="left:2582.8px;top:1212.9px;font-size:21px;line-height:21px;color:#4f6f6d;-webkit-text-stroke:0.35px #4f6f6d;">删除</div>
<div class="a" style="left:373.5px;top:1285px;width:2397.0px;height:172.0px;background:#f4f2f5;border-bottom:1.5px solid #ebe9ec"></div>
<div class="a" style="left:381px;top:1363.5px;width:20.6px;height:20.5px;background:#fff;border:1px solid #dcdcdf;border-radius:2px"></div>
<div class="t" style="left:455.8px;top:1362.5px;font-size:21px;line-height:21px;color:#333;">6</div>
<div class="t" style="left:531.2px;top:1362.5px;font-size:21px;line-height:21px;color:#333;">设备名称3</div>
<div class="t" style="left:836.5px;top:1362.5px;font-size:21px;line-height:21px;color:#333;">设备类型3</div>
<div class="t" style="left:1143.3px;top:1362.5px;font-size:21px;line-height:21px;color:#333;">型号3</div>
<div class="t" style="left:1449.8px;top:1362.5px;font-size:21px;line-height:21px;color:#333;">正常</div>
<svg style="left:1755px;top:1293.0px" width="149" height="149" viewBox="0 0 100 100" preserveAspectRatio="none"><rect width="100" height="100" fill="#dedee0"/>
<rect x="0" y="0" width="100" height="34" fill="#e6e6e8"/>
<rect x="0" y="2" width="9" height="30" fill="#f6f6f6"/>
<rect x="27" y="1" width="5" height="33" fill="#3a7ac8"/>
<rect x="32" y="5" width="16" height="28" fill="#f2f2f2"/>
<rect x="48" y="5" width="4" height="28" fill="#3a78c8"/>
<rect x="68" y="12" width="29" height="18" fill="#2c6a52"/>
<rect x="85" y="31" width="12" height="6" fill="#202020"/>
<rect x="0" y="34" width="100" height="66" fill="#d4d4d6"/>
<path d="M0 42 L70 36 L70 40 L0 48Z" fill="#3aa050"/>
<rect x="0" y="36" width="14" height="8" fill="#a8a8ac"/>
<rect x="16" y="33" width="50" height="5" fill="#a0a0a4"/>
<rect x="0" y="48" width="25" height="30" fill="#cdcdd0"/>
<rect x="26" y="48" width="10" height="16" fill="#78787c"/>
<path d="M26 58 L80 46 L80 55 L26 66Z" fill="#e4e4e6"/>
<rect x="26" y="58" width="54" height="42" fill="#c6c6c8"/>
<rect x="35" y="64" width="4" height="4" fill="#2a2a2a"/><rect x="45" y="62" width="4" height="4" fill="#2a2a2a"/><rect x="55" y="60" width="4" height="4" fill="#2a2a2a"/><rect x="65" y="58" width="4" height="4" fill="#2a2a2a"/>
<rect x="37" y="73" width="4" height="4" fill="#2a2a2a"/><rect x="48" y="71" width="6" height="6" fill="#2a2a2a"/><rect x="60" y="69" width="4" height="4" fill="#2a2a2a"/>
<rect x="44" y="80" width="6" height="8" fill="#b83030"/>
<rect x="6" y="62" width="10" height="3" fill="#3868c0"/>
<path d="M42 100 L95 68 L100 70 L100 100Z" fill="#26a040"/>
<rect x="82" y="42" width="18" height="22" fill="#c8c8ca"/>
<rect x="10" y="75" width="6" height="25" fill="#505054"/></svg>
<div class="t" style="left:2053.8px;top:1362.5px;font-size:21.5px;line-height:21.5px;color:#333;">2025-05-08</div>
<div class="btn" style="left:2360.7px;top:1316.5px;width:74px;height:47px"></div>
<div class="t" style="left:2377.1px;top:1329.5px;font-size:21px;line-height:21px;color:#4f6f6d;-webkit-text-stroke:0.35px #4f6f6d;">查看</div>
<div class="btn" style="left:2442.5px;top:1316.5px;width:116px;height:47px"></div>
<div class="t" style="left:2458.9px;top:1329.5px;font-size:21px;line-height:21px;color:#4f6f6d;-webkit-text-stroke:0.35px #4f6f6d;">设备巡检</div>
<div class="btn" style="left:2566.4px;top:1316.5px;width:158px;height:47px"></div>
<div class="t" style="left:2582.8px;top:1329.5px;font-size:21px;line-height:21px;color:#4f6f6d;-webkit-text-stroke:0.35px #4f6f6d;">提交保养计划</div>
<div class="btn" style="left:2360.7px;top:1371.8px;width:116px;height:47px"></div>
<div class="t" style="left:2377.1px;top:1384.8px;font-size:21px;line-height:21px;color:#4f6f6d;-webkit-text-stroke:0.35px #4f6f6d;">设备报废</div>
<div class="btn" style="left:2484.4px;top:1371.8px;width:74px;height:47px"></div>
<div class="t" style="left:2500.8px;top:1384.8px;font-size:21px;line-height:21px;color:#4f6f6d;-webkit-text-stroke:0.35px #4f6f6d;">修改</div>
<div class="btn" style="left:2566.4px;top:1371.8px;width:74px;height:47px"></div>
<div class="t" style="left:2582.8px;top:1384.8px;font-size:21px;line-height:21px;color:#4f6f6d;-webkit-text-stroke:0.35px #4f6f6d;">删除</div>
<svg style="left:2443px;top:637px" width="22" height="32" viewBox="0 0 22 32"><path d="M2 2 L2 25 L7.5 20 L11.5 29 L15 27.5 L11 18.5 L18.5 18.5Z" fill="#fff" stroke="#111" stroke-width="1.6" stroke-linejoin="round"/></svg>
<div class="a" style="left:2846px;top:0px;width:22.0px;height:1422.0px;background:#fbf9fb"></div>
<svg style="left:2846px;top:0px" width="22" height="1422" viewBox="0 0 22 1422"><path d="M5 18 L11 10.5 L17 18Z" fill="#8a898e"/><path d="M5 1407 L11 1415 L17 1407Z" fill="#8a898e"/><rect x="4" y="28" width="13.5" height="1000.5" rx="6.7" fill="#8b8a8f"/></svg>
</body></html>
